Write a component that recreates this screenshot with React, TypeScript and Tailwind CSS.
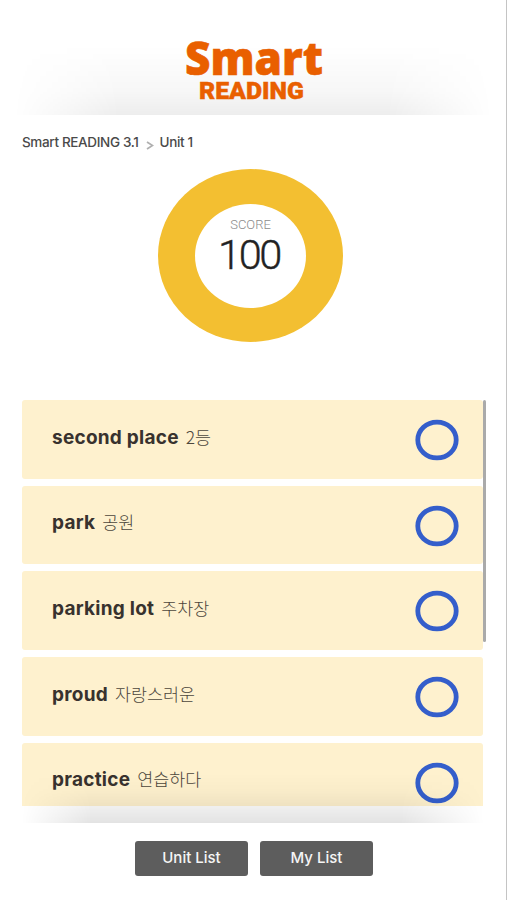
import React from 'react';

interface Word {
  en: string;
  ko: string;
}

const words: Word[] = [
  { en: 'second place', ko: '2등' },
  { en: 'park', ko: '공원' },
  { en: 'parking lot', ko: '주차장' },
  { en: 'proud', ko: '자랑스러운' },
  { en: 'practice', ko: '연습하다' },
];

const Logo: React.FC = () => (
  <svg
    width="144"
    height="70"
    viewBox="0 0 144 70"
    className="shrink-0 overflow-visible"
    fill="#e95f00"
    stroke="#e95f00"
    fontWeight="900"
  >
    <text x="4" y="37.5" fontSize="46" strokeWidth="0.6" fontFamily="'Noto Sans', sans-serif" textLength="138" lengthAdjust="spacingAndGlyphs">Smart</text>
    <text x="18" y="62" fontSize="23" strokeWidth="0.4" fontFamily="Roboto, sans-serif" textLength="105" lengthAdjust="spacingAndGlyphs">READING</text>
  </svg>
);

const ScoreRing: React.FC<{ score: number }> = ({ score }) => (
  <div className="ml-[158px] mt-[17px] flex h-[173px] w-[185px] shrink-0 items-center justify-center rounded-[50%] bg-[#f3bf31]">
    <div className="flex h-[104px] w-[111px] flex-col items-center rounded-[50%] bg-white font-['Roboto',sans-serif]">
      <span className="mt-[13px] text-[13px] leading-[16px] font-light text-[#8c8c8c]">SCORE</span>
      <span className="-ml-[3px] text-[41.5px] leading-[44px] font-light tracking-[-2.4px] text-[#222] [-webkit-text-stroke:0.4px_#222]">
        {score}
      </span>
    </div>
  </div>
);

const WordRow: React.FC<{ word: Word }> = ({ word }) => (
  <li className="flex h-[78.7px] shrink-0 items-center justify-between rounded-[3px] bg-[#fef1ce] pr-[24px] pl-[30px]">
    <p className="-mt-[3px] flex items-baseline gap-[7px]">
      <span className="text-[19px] font-bold tracking-[0.25px] text-[#38322e]">{word.en}</span>
      <span className="font-['Noto_Sans_CJK_KR',sans-serif] text-[17.4px] font-light text-[#4c463c]">{word.ko}</span>
    </p>
    <svg width="44" height="42" viewBox="0 0 44 42" className="mt-px" fill="none" stroke="#345ecb" strokeWidth="4.8">
      <ellipse cx="22" cy="21" rx="19.2" ry="17.9" />
    </svg>
  </li>
);

const NavButton: React.FC<{ label: string }> = ({ label }) => (
  <button className="flex h-[35px] w-[113px] items-start justify-center rounded-[3px] bg-[#5d5d5d] pt-[7px] text-[15px] leading-[20px] font-medium text-[#f5f5f5]">
    {label}
  </button>
);

const App: React.FC = () => {
  return (
    <div className="flex h-[900px] w-[507px] flex-col overflow-hidden border-r border-[#c4c4c4] bg-white font-['Inter',sans-serif]">
      <header className="relative flex h-[115px] shrink-0 justify-center pt-[37px]">
        <div className="absolute inset-x-[14px] bottom-0 h-[70px] bg-[linear-gradient(to_top,rgba(0,0,0,0.07),rgba(0,0,0,0.03)_35%,transparent)] mask-[linear-gradient(to_right,transparent,black_22%,black_78%,transparent)]" />
        <div className="relative mr-px">
          <Logo />
        </div>
      </header>

      <nav className="ml-[22px] mt-[17px] flex h-[20px] shrink-0 items-center text-[13.5px] font-medium tracking-[-0.35px] text-[#4a4a4a]">
        <span>Smart READING 3.1</span>
        <svg width="8" height="9" viewBox="0 0 8 9" className="mt-[6px] mr-[6px] ml-[7px]" fill="none" stroke="#b0b0b0" strokeWidth="1.8">
          <path d="M1 1L6.5 4.5L1 8" />
        </svg>
        <span>Unit 1</span>
      </nav>

      <ScoreRing score={100} />

      <main className="relative mt-[58px] h-[423px] shrink-0">
        <ul className="ml-[22px] flex h-[405.5px] w-[461px] flex-col gap-[7px] overflow-hidden">
          {words.map((word) => (
            <WordRow key={word.en} word={word} />
          ))}
        </ul>
        {/* scroll thumb */}
        <div className="absolute top-0 right-[20px] h-[242px] w-[3px] rounded-full bg-[#aaa]" />
        {/* shadow fading up over the end of the list */}
        <div className="absolute inset-x-[22px] bottom-0 h-[50px] bg-[linear-gradient(to_top,rgba(0,0,0,0.11),rgba(0,0,0,0.06)_35%,rgba(0,0,0,0.02)_65%,transparent)] mask-[linear-gradient(to_right,transparent,black_15%,black_82%,transparent)]" />
      </main>

      <footer className="mt-[18px] flex gap-[12px] pl-[135px]">
        <NavButton label="Unit List" />
        <NavButton label="My List" />
      </footer>
    </div>
  );
};

export default App;
